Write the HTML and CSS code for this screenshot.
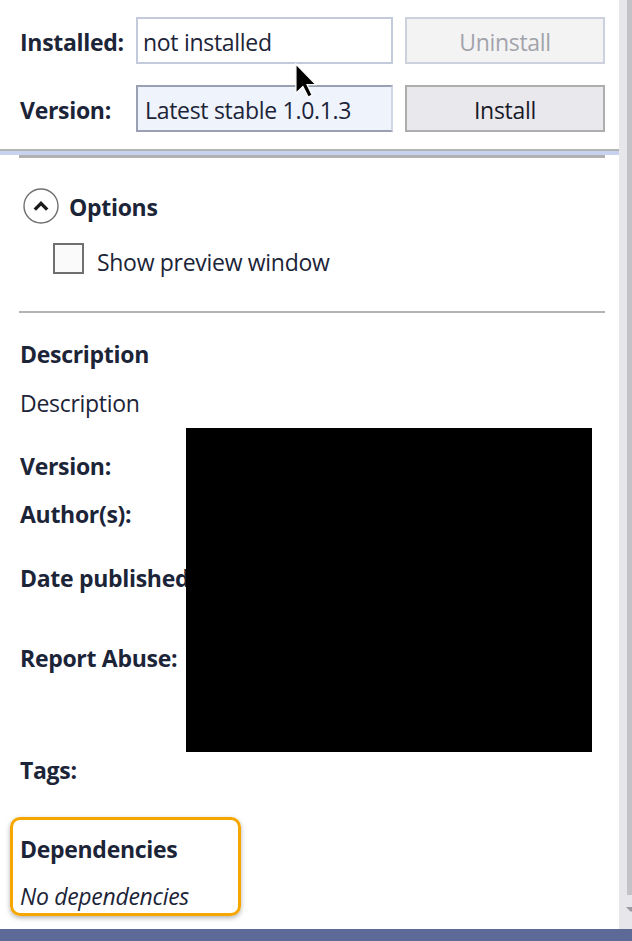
FILE: index.html
```html
<!DOCTYPE html>
<html>
<head>
<meta charset="utf-8">
<title>Package details</title>
<link rel="stylesheet" href="styles.css">
</head>
<body>
<div class="frame">
  <div class="row">
    <div class="main">
      <div class="top">
        <div class="label">Installed:</div>
        <div class="field field-plain">not installed</div>
        <div class="btn btn-disabled">Uninstall</div>
        <div class="label">Version:</div>
        <div class="field field-combo">Latest stable 1.0.1.3</div>
        <div class="btn btn-normal">Install</div>
      </div>

      <div class="splitter">
        <div class="split-top"></div>
        <div class="split-mid"></div>
        <div class="split-bot"></div>
      </div>

      <div class="options">
        <div class="opt-head">
          <span class="expander">
            <svg width="36" height="36" viewBox="0 0 36 36">
              <circle cx="18" cy="18" r="17" fill="none" stroke="#707070" stroke-width="1.4"/>
              <polyline points="11.8,21.6 18,15.4 24.2,21.6" fill="none" stroke="#1b1b1b" stroke-width="3.4" stroke-linejoin="miter"/>
            </svg>
          </span>
          <span class="opt-title">Options</span>
        </div>
        <div class="check-row">
          <span class="checkbox"></span>
          <span class="check-label">Show preview window</span>
        </div>
      </div>

      <div class="rule"></div>

      <div class="details">
        <div class="heading">Description</div>
        <div class="text desc-text">Description</div>
        <div class="heading meta-version">Version:</div>
        <div class="heading meta-author">Author(s):</div>
        <div class="heading meta-date">Date published:</div>
        <div class="heading meta-report">Report Abuse:</div>
        <div class="heading meta-tags">Tags:</div>
      </div>

      <div class="deps">
        <div class="heading">Dependencies</div>
        <div class="text deps-none">No dependencies</div>
      </div>

      <div class="redact"></div>

      <svg class="cursor" width="22" height="35" viewBox="0 0 12 19">
        <polygon points="0.5,0.5 0.5,16.5 4.3,12.8 7.2,18.5 9.4,17.5 6.6,11.8 11.5,11.8" fill="#000" stroke="#fff" stroke-width="0.7" stroke-linejoin="miter"/>
      </svg>
    </div>
    <div class="scrollbar">
      <div class="thumb"></div>
      <div class="arrow"></div>
    </div>
  </div>
  <div class="status"></div>
</div>
</body>
</html>
```

FILE: styles.css
```css
html, body {
  margin: 0;
  padding: 0;
  background: #ffffff;
}

body {
  font-family: "Open Sans", "Noto Sans", "DejaVu Sans", sans-serif;
  font-size: 23px;
  line-height: 32px;
  color: #1c2438;
  letter-spacing: -0.3px;
}

.frame {
  width: 632px;
  height: 941px;
  display: flex;
  flex-direction: column;
  overflow: hidden;
}

.row {
  flex: 1;
  min-height: 0;
  display: flex;
}

.main {
  position: relative;
  width: 619px;
  flex: none;
  overflow: hidden;
}

/* top install area */
.top {
  display: grid;
  grid-template-columns: 104px 257px 200px;
  grid-auto-rows: 47px;
  column-gap: 12px;
  row-gap: 21px;
  padding: 17px 0 0 20px;
}

.label {
  font-weight: 700;
  display: flex;
  align-items: center;
  padding-top: 2px;
  white-space: nowrap;
}

.field {
  box-sizing: border-box;
  display: flex;
  align-items: center;
  padding: 2px 0 0 5px;
  border: 2px solid #c3cadb;
  white-space: nowrap;
  overflow: hidden;
}

.field-plain {
  background: #ffffff;
}

.field-combo {
  background: #eef3fc;
  border-color: #98a0b2;
  border-right-color: #d0d6e4;
  padding-left: 7px;
}

.btn {
  box-sizing: border-box;
  display: flex;
  align-items: center;
  justify-content: center;
  padding-top: 2px;
  border: 2px solid #adadad;
}

.btn-disabled {
  background: #f3f3f4;
  border-color: #cdd1de;
  color: #a2a3aa;
}

.btn-normal {
  background: #e9e8ed;
  border-color: #adadad;
  color: #1a1a28;
}

/* splitter */
.splitter {
  margin-top: 17px;
}

.split-top {
  height: 2px;
  background: #b3b3b3;
}

.split-mid {
  height: 4px;
  background: #c7d3ee;
}

.split-bot {
  height: 3px;
  margin: 0 14px 0 19px;
  background: #b1b1b1;
}

/* options */
.options {
  padding-left: 23px;
}

.opt-head {
  margin-top: 30px;
  display: flex;
  align-items: center;
  gap: 10px;
}

.expander {
  width: 36px;
  height: 36px;
  display: block;
}

.expander svg {
  display: block;
}

.opt-title {
  font-weight: 700;
  padding-top: 2px;
}

.check-row {
  margin-top: 19px;
  padding-left: 30px;
  display: flex;
  align-items: flex-start;
  gap: 13px;
}

.checkbox {
  box-sizing: border-box;
  width: 31px;
  height: 31px;
  border: 2px solid #6f6f6f;
  background: #fafafa;
  flex: none;
}

.check-label {
  padding-top: 3px;
}

.rule {
  margin: 33px 14px 0 19px;
  height: 2px;
  background: #b5b5b5;
}

/* details */
.details {
  padding-left: 20px;
  margin-top: 25px;
}

.heading {
  font-weight: 700;
  white-space: nowrap;
}

.text {
  white-space: nowrap;
}

.desc-text { margin-top: 17px; }
.meta-version { margin-top: 31px; }
.meta-author { margin-top: 16px; }
.meta-date { margin-top: 32px; }
.meta-report { margin-top: 48px; }
.meta-tags { margin-top: 80px; }

.deps {
  box-sizing: border-box;
  margin: 31px 0 0 10px;
  width: 231px;
  height: 99px;
  padding: 13px 0 0 7px;
  border: 3px solid #f5a700;
  border-radius: 10px;
  box-shadow: 0 2px 5px rgba(0, 0, 0, 0.3);
}

.deps-none {
  margin-top: 16px;
  font-style: italic;
  line-height: 30px;
}

/* overlays */
.redact {
  position: absolute;
  left: 186px;
  top: 428px;
  width: 406px;
  height: 324px;
  background: #000000;
}

.cursor {
  position: absolute;
  left: 295px;
  top: 63px;
}

/* scrollbar */
.scrollbar {
  width: 13px;
  flex: none;
  background: #e6e6eb;
  display: flex;
  flex-direction: column;
}

.thumb {
  margin-left: 8px;
  width: 5px;
  height: 895px;
  background: #c2c2c7;
}

.arrow {
  margin: 12px 0 0 7px;
  width: 0;
  height: 0;
  border-left: 5px solid transparent;
  border-right: 5px solid transparent;
  border-top: 5px solid #9a9aa4;
}

.status {
  height: 12px;
  flex: none;
  background: #5d6a98;
}
```
